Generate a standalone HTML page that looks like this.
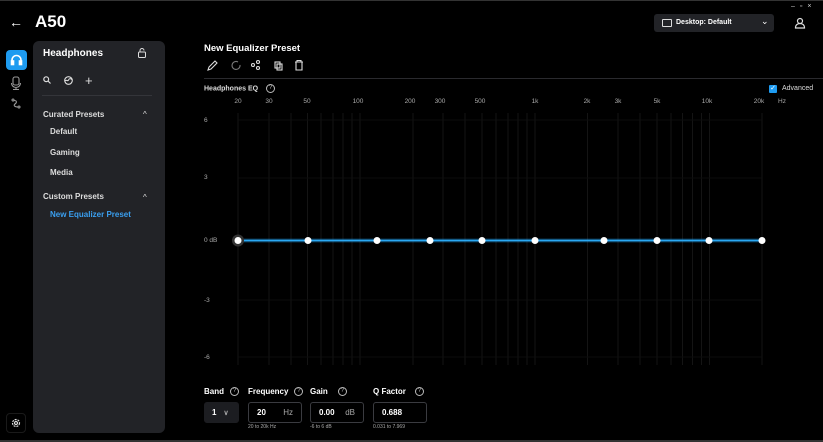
<!DOCTYPE html>
<html><head><meta charset="utf-8"><style>
*{margin:0;padding:0;box-sizing:border-box}
body{width:823px;height:442px;background:#000;color:#fff;font-family:"Liberation Sans",sans-serif;position:relative;overflow:hidden}
.a{position:absolute;white-space:nowrap}
.panel{left:33px;top:41px;width:132px;height:392px;background:#222327;border-radius:6px}
.lbl{font-size:8px;font-weight:bold}
.box{position:absolute;top:402px;height:21px;border:1px solid #3a3b40;border-radius:3px;font-size:8px;font-weight:bold;padding:5px 8px;white-space:nowrap}
.q{display:inline-block;width:9px;height:9px;border:1px solid #bbb;border-radius:50%;font-size:6px;text-align:center;line-height:7px;color:#bbb;margin-left:6px;vertical-align:middle;font-weight:normal}
</style></head><body>
<div class="a" style="left:0;top:0;width:823px;height:1px;background:#333"></div>
<div class="a" style="left:9px;top:14px;font-size:14px">←</div>
<div class="a" style="left:35px;top:12px;font-size:17px;font-weight:bold">A50</div>
<div class="a" style="left:791px;top:3px;font-size:7px;color:#ccc;letter-spacing:5px">–▫×</div>
<div class="a" style="left:654px;top:14px;width:120px;height:18px;background:#222327;border-radius:3px"></div>
<div class="a" style="left:662px;top:19px;width:10px;height:8px;border:1px solid #ddd;border-radius:1px"></div>
<div class="a" style="left:676px;top:19px;font-size:7px;font-weight:bold">Desktop: Default</div>
<div class="a" style="left:761px;top:16px;font-size:9px">⌄</div>
<svg class="a" style="left:794px;top:17px" width="12" height="12" viewBox="0 0 12 12" fill="none" stroke="#ddd" stroke-width="1.2"><circle cx="6" cy="4" r="2.5"/><path d="M1.5 11h9c0-3-2-4.5-4.5-4.5S1.5 8 1.5 11z"/></svg>
<div class="a" style="left:6px;top:50px;width:21px;height:20px;background:#1e9bf0;border-radius:4px"></div>
<svg class="a" style="left:10px;top:54px" width="13" height="12" viewBox="0 0 13 12" fill="none" stroke="#fff" stroke-width="1.6"><path d="M2 9V6a4.5 4.5 0 0 1 9 0v3"/><rect x="1.5" y="7" width="2" height="3.5" fill="#fff"/><rect x="9.5" y="7" width="2" height="3.5" fill="#fff"/></svg>
<svg class="a" style="left:10px;top:76px" width="12" height="14" viewBox="0 0 12 14" fill="none" stroke="#999" stroke-width="1.1"><rect x="3" y="1" width="6" height="8" rx="2"/><path d="M1.5 7a4.5 4.5 0 0 0 9 0M6 11.5v2M3 13.5h6"/></svg>
<svg class="a" style="left:11px;top:98px" width="10" height="11" viewBox="0 0 10 11" fill="none" stroke="#999" stroke-width="1.1"><circle cx="2" cy="2" r="1"/><circle cx="8" cy="9" r="1"/><path d="M3 2.5c3 0 3 2 1 3.5s0 3 3 3"/></svg>
<div class="a" style="left:6px;top:413px;width:20px;height:20px;border:1px solid #1a1a1a;border-radius:4px"></div>
<svg class="a" style="left:11px;top:418px" width="10" height="10" viewBox="0 0 10 10" fill="none" stroke="#ddd" stroke-width="1.2"><circle cx="5" cy="5" r="3.5" stroke-dasharray="2 1"/><circle cx="5" cy="5" r="1.5"/></svg>
<div class="a panel"></div>
<div class="a" style="left:43px;top:48px;font-size:10px;font-weight:bold">Headphones</div>
<svg class="a" style="left:138px;top:48px" width="8" height="10" viewBox="0 0 8 10" fill="none" stroke="#ddd" stroke-width="1"><rect x="0.5" y="4" width="7" height="5.5" rx="1"/><path d="M2 4V2.5a2 2 0 0 1 4 0"/></svg>
<svg class="a" style="left:43px;top:76px" width="8" height="8" viewBox="0 0 8 8" fill="none" stroke="#ddd" stroke-width="1.2"><circle cx="3.2" cy="3.2" r="2.4"/><path d="M5 5l2.5 2.5"/></svg>
<svg class="a" style="left:64px;top:76px" width="9" height="9" viewBox="0 0 9 9" fill="none" stroke="#ddd" stroke-width="1.1"><circle cx="4.5" cy="4.5" r="3.8"/><path d="M1 5c1.5-2 2.5 1 3.5-1s2-1.5 3.5-0.5"/></svg>
<div class="a" style="left:85px;top:73px;font-size:13px;color:#ddd">+</div>
<div class="a" style="left:42px;top:95px;width:110px;height:1px;background:#34353a"></div>
<div class="a" style="left:43px;top:110px;font-size:8px;font-weight:bold;color:#ddd">Curated Presets</div>
<div class="a" style="left:143px;top:110px;font-size:8px;color:#ddd">^</div>
<div class="a" style="left:50px;top:127px;font-size:8px;font-weight:bold;color:#ddd">Default</div>
<div class="a" style="left:50px;top:148px;font-size:8px;font-weight:bold;color:#ddd">Gaming</div>
<div class="a" style="left:50px;top:168px;font-size:8px;font-weight:bold;color:#ddd">Media</div>
<div class="a" style="left:43px;top:192px;font-size:8px;font-weight:bold;color:#ddd">Custom Presets</div>
<div class="a" style="left:143px;top:193px;font-size:8px;color:#ddd">^</div>
<div class="a" style="left:50px;top:210px;font-size:8px;font-weight:bold;color:#3a9ff0">New Equalizer Preset</div>
<div class="a" style="left:204px;top:43px;font-size:9.5px;font-weight:bold">New Equalizer Preset</div>
<svg class="a" style="left:207px;top:59px" width="100" height="12" viewBox="0 0 100 12" fill="none" stroke="#ddd" stroke-width="1.1">
<path d="M1 11l1-3 6-6 2 2-6 6z"/>
<path d="M31 3a4 4 0 1 0 2 3" stroke="#777"/>
<circle cx="46" cy="6" r="1.5"/><circle cx="51" cy="3" r="1.5"/><circle cx="51" cy="9" r="1.5"/>
<rect x="68" y="3" width="5" height="6"/><rect x="70" y="5" width="5" height="6"/>
<path d="M88 3h8M90 3V1.5h4V3M89 3v8h6V3"/>
</svg>
<div class="a" style="left:204px;top:78px;width:619px;height:1px;background:#2a2a2e"></div>
<div class="a" style="left:204px;top:84px;font-size:7px;font-weight:bold;color:#ddd">Headphones EQ <span class="q">?</span></div>
<div class="a" style="left:769px;top:85px;width:8px;height:8px;background:#1e9bf0;border-radius:1px;font-size:7px;line-height:8px;text-align:center">✓</div>
<div class="a" style="left:782px;top:85px;font-size:7px;color:#ddd">Advanced</div>
<svg class="a" style="left:0;top:0" width="823" height="442">
<g stroke="#141414" stroke-width="1">
<line x1="238" y1="113" x2="238" y2="365"/><line x1="269" y1="113" x2="269" y2="365"/><line x1="291" y1="113" x2="291" y2="365"/><line x1="307.5" y1="113" x2="307.5" y2="365"/><line x1="321" y1="113" x2="321" y2="365"/><line x1="333" y1="113" x2="333" y2="365"/><line x1="343" y1="113" x2="343" y2="365"/><line x1="352" y1="113" x2="352" y2="365"/><line x1="360" y1="113" x2="360" y2="365"/>
<line x1="413" y1="113" x2="413" y2="365"/><line x1="443" y1="113" x2="443" y2="365"/><line x1="465" y1="113" x2="465" y2="365"/><line x1="482" y1="113" x2="482" y2="365"/><line x1="496" y1="113" x2="496" y2="365"/><line x1="508" y1="113" x2="508" y2="365"/><line x1="518" y1="113" x2="518" y2="365"/><line x1="527" y1="113" x2="527" y2="365"/><line x1="535" y1="113" x2="535" y2="365"/>
<line x1="587.5" y1="113" x2="587.5" y2="365"/><line x1="618" y1="113" x2="618" y2="365"/><line x1="640" y1="113" x2="640" y2="365"/><line x1="657" y1="113" x2="657" y2="365"/><line x1="671" y1="113" x2="671" y2="365"/><line x1="682.5" y1="113" x2="682.5" y2="365"/><line x1="692.5" y1="113" x2="692.5" y2="365"/><line x1="701.5" y1="113" x2="701.5" y2="365"/><line x1="709.5" y1="113" x2="709.5" y2="365"/><line x1="762" y1="113" x2="762" y2="365"/>
</g>
<g stroke="#0d0d0d" stroke-width="1">
<line x1="238" y1="120" x2="762" y2="120"/><line x1="238" y1="178" x2="762" y2="178"/><line x1="238" y1="300" x2="762" y2="300"/><line x1="238" y1="357" x2="762" y2="357"/>
</g>
<g font-family="Liberation Sans" font-size="6.5" fill="#aaa" text-anchor="middle">
<text x="238" y="103">20</text><text x="269" y="103">30</text><text x="307" y="103">50</text><text x="358" y="103">100</text><text x="410" y="103">200</text><text x="440" y="103">300</text><text x="480" y="103">500</text><text x="535" y="103">1k</text><text x="587" y="103">2k</text><text x="618" y="103">3k</text><text x="657" y="103">5k</text><text x="707" y="103">10k</text><text x="759" y="103">20k</text><text x="782" y="103">Hz</text>
</g>
<g font-family="Liberation Sans" font-size="6.5" fill="#aaa">
<text x="204" y="122">6</text><text x="204" y="179">3</text><text x="204" y="242">0 dB</text><text x="204" y="302">-3</text><text x="204" y="359">-6</text>
</g>
<line x1="238" y1="240.5" x2="762" y2="240.5" stroke="#1e9bf0" stroke-width="4" opacity="0.3"/>
<line x1="238" y1="240.5" x2="762" y2="240.5" stroke="#2aa8f2" stroke-width="1.8"/>
<circle cx="238" cy="240.5" r="6" fill="#333"/>
<g fill="#fff"><circle cx="238" cy="240.5" r="3.5"/><circle cx="308" cy="240.5" r="3.5"/><circle cx="377" cy="240.5" r="3.5"/><circle cx="430" cy="240.5" r="3.5"/><circle cx="482" cy="240.5" r="3.5"/><circle cx="535" cy="240.5" r="3.5"/><circle cx="604" cy="240.5" r="3.5"/><circle cx="657" cy="240.5" r="3.5"/><circle cx="709" cy="240.5" r="3.5"/><circle cx="762" cy="240.5" r="3.5"/></g>
</svg>
<div class="a lbl" style="left:204px;top:387px">Band<span class="q">?</span></div>
<div class="a lbl" style="left:248px;top:387px">Frequency<span class="q">?</span></div>
<div class="a lbl" style="left:310px;top:387px">Gain<span class="q" style="margin-left:10px">?</span></div>
<div class="a lbl" style="left:373px;top:387px">Q Factor<span class="q" style="margin-left:9px">?</span></div>
<div class="box" style="left:204px;width:35px;background:#1c1d21;border-color:#1c1d21;padding:5px 7px">1<span style="color:#aaa;margin-left:7px;font-size:7px">∨</span></div>
<div class="box" style="left:248px;width:54px">20<span style="position:absolute;right:8px;color:#aaa;font-weight:normal">Hz</span></div>
<div class="box" style="left:310px;width:54px">0.00<span style="position:absolute;right:8px;color:#aaa;font-weight:normal">dB</span></div>
<div class="box" style="left:373px;width:54px">0.688</div>
<div class="a" style="left:248px;top:424px;font-size:5px;color:#aaa">20 to 20k Hz</div>
<div class="a" style="left:310px;top:424px;font-size:5px;color:#aaa">-6 to 6 dB</div>
<div class="a" style="left:373px;top:424px;font-size:5px;color:#aaa">0.031 to 7.969</div>
<div class="a" style="left:0;top:440px;width:823px;height:2px;background:#333"></div>
</body></html>
